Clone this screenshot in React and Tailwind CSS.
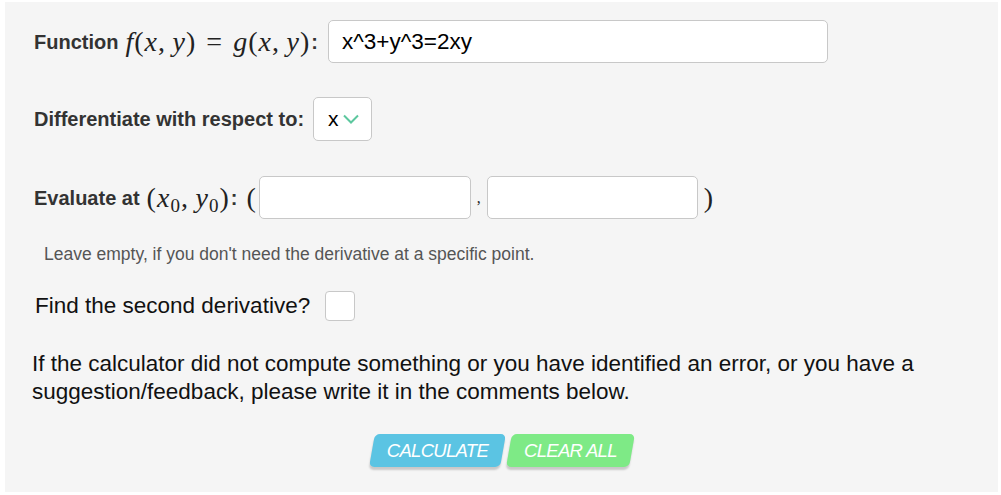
import { useState } from "react";

// Math snippet rendered in a serif italic, like a TeX formula.
function V({ children }) {
  return <span className="italic">{children}</span>;
}

function Sub({ v }) {
  return (
    <span>
      <span className="italic">{v}</span>
      <span className="relative top-[5px] text-[19px] not-italic">0</span>
    </span>
  );
}

export default function App() {
  const [fn, setFn] = useState("x^3+y^3=2xy");
  const [x0, setX0] = useState("");
  const [y0, setY0] = useState("");
  const [second, setSecond] = useState(false);

  return (
    <div className="h-[495px] w-[1001px] bg-white pt-[2px] pl-[5px] font-['Liberation_Sans',Arial,sans-serif]">
      <div className="flex h-[490px] w-[993px] flex-col bg-[#f5f5f5] pt-[18px]">
        {/* Function row */}
        <div className="flex h-[43px] items-center pl-[29px]">
          <span className="text-[20px] font-bold text-[#333]">Function</span>
          <span className="ml-[7px] font-['Liberation_Serif',serif] text-[28px] text-[#222] tracking-[1px]">
            <V>f</V>(<V>x</V>,&thinsp;<V>y</V>)<span className="mx-[10px]">=</span>
            <V>g</V>(<V>x</V>,&thinsp;<V>y</V>)
          </span>
          <span className="ml-[1px] text-[20px] font-bold text-[#333]">:</span>
          <input
            value={fn}
            onChange={(e) => setFn(e.target.value)}
            className="ml-[10px] h-[43px] w-[500px] rounded-[5px] border border-[#c8c8c8] bg-white px-[13px] text-[22.5px] text-black outline-none"
          />
        </div>

        {/* Variable select */}
        <div className="mt-[34px] flex h-[44px] items-center pl-[29px]">
          <span className="text-[20px] font-bold text-[#333]">Differentiate with respect to:</span>
          <div className="ml-[9px] flex h-[44px] w-[59px] items-center rounded-[5px] border border-[#c8c8c8] bg-white pl-[14px]">
            <span className="text-[21px] text-black">x</span>
            <svg width="16" height="10" viewBox="0 0 16 10" className="ml-[4px]">
              <path d="M1 1.5 L8 8.5 L15 1.5" fill="none" stroke="#5cc79e" strokeWidth="2" />
            </svg>
          </div>
        </div>

        {/* Point row */}
        <div className="mt-[35px] flex h-[43px] items-center pl-[29px]">
          <span className="text-[20px] font-bold text-[#333]">Evaluate at</span>
          <span className="ml-[7px] font-['Liberation_Serif',serif] text-[28px] text-[#222] tracking-[1px]">
            (<Sub v="x" />,&thinsp;<Sub v="y" />)
          </span>
          <span className="ml-[1px] text-[20px] font-bold text-[#333]">:</span>
          <span className="ml-[9px] font-['Liberation_Serif',serif] text-[28px] text-[#222]">(</span>
          <input
            value={x0}
            onChange={(e) => setX0(e.target.value)}
            className="ml-[3px] h-[43px] w-[212px] rounded-[5px] border border-[#c8c8c8] bg-white px-[10px] text-[20px] outline-none"
          />
          <span className="mx-[6px] font-['Liberation_Serif',serif] text-[16px] text-[#222]">,</span>
          <input
            value={y0}
            onChange={(e) => setY0(e.target.value)}
            className="h-[43px] w-[211px] rounded-[5px] border border-[#c8c8c8] bg-white px-[10px] text-[20px] outline-none"
          />
          <span className="ml-[6px] font-['Liberation_Serif',serif] text-[28px] text-[#222]">)</span>
        </div>

        <p className="mt-[25px] pl-[39px] text-[17.5px] leading-[20px] text-[#555]">
          Leave empty, if you don't need the derivative at a specific point.
        </p>

        {/* Second derivative */}
        <div className="mt-[27px] flex h-[30px] items-center pl-[30px]">
          <span className="text-[22.5px] text-[#111]">Find the second derivative?</span>
          <button
            onClick={() => setSecond(!second)}
            className="ml-[15px] flex h-[30px] w-[30px] items-center justify-center rounded-[4px] border border-[#c8c8c8] bg-white"
          >
            {second && (
              <svg width="16" height="16" viewBox="0 0 16 16">
                <path d="M2 8 L6 12 L14 3" fill="none" stroke="#5cc79e" strokeWidth="2.5" />
              </svg>
            )}
          </button>
        </div>

        <p className="mt-[29px] pl-[27px] pr-[60px] text-[22.5px] leading-[28px] text-[#111]">
          If the calculator did not compute something or you have identified an error, or you have a
          suggestion/feedback, please write it in the comments below.
        </p>

        {/* Buttons */}
        <div className="mt-[28px] flex justify-center gap-[6px]">
          <button className="h-[33px] w-[131px] -skew-x-[10deg] rounded-[5px] bg-[#5bc4e3] shadow-[0_3px_2px_rgba(0,0,0,0.18)]">
            <span className="block skew-x-[10deg] text-[18.5px] italic tracking-[-0.7px] text-white">CALCULATE</span>
          </button>
          <button className="h-[33px] w-[123px] -skew-x-[10deg] rounded-[5px] bg-[#7eea86] shadow-[0_3px_2px_rgba(0,0,0,0.18)]">
            <span className="block skew-x-[10deg] text-[18.5px] italic tracking-[-0.7px] text-white">CLEAR ALL</span>
          </button>
        </div>
      </div>
    </div>
  );
}
